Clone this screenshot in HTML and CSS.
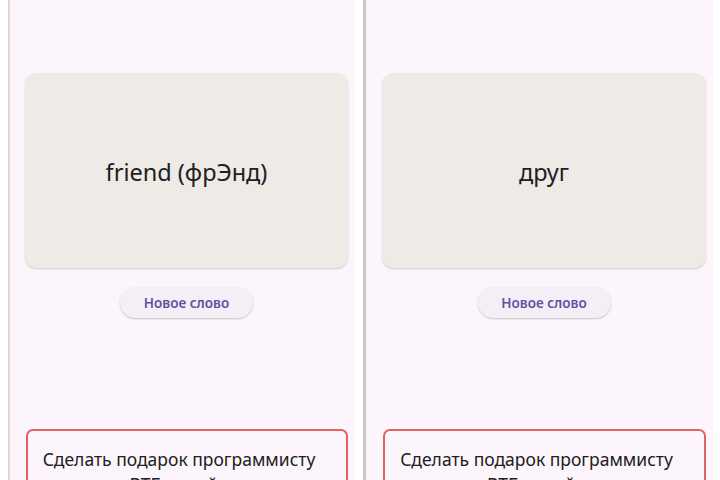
FILE: index.html
```html
<!DOCTYPE html>
<html lang="ru">
<head>
<meta charset="utf-8">
<link rel="stylesheet" href="styles.css">
</head>
<body>
<div class="screens">
  <section class="phone phone-left">
    <div class="card"><span class="word">friend (фрЭнд)</span></div>
    <div class="btn-row"><button class="btn">Новое слово</button></div>
    <div class="gift">Сделать подарок программисту ВТБ онлайн</div>
  </section>
  <section class="phone phone-right">
    <div class="card"><span class="word">друг</span></div>
    <div class="btn-row"><button class="btn">Новое слово</button></div>
    <div class="gift">Сделать подарок программисту ВТБ онлайн</div>
  </section>
</div>
</body>
</html>
```
FILE: styles.css
```css
html, body {
  margin: 0;
  padding: 0;
  background: #ffffff;
  height: 480px;
  overflow: hidden;
}
body {
  font-family: "Noto Sans", "Open Sans", sans-serif;
}
.screens {
  display: flex;
  height: 480px;
  padding-left: 8px;
  gap: 8px;
}
.phone {
  background: #fcf5fc;
  border-left: 2px solid #dcd8de;
  padding: 73px 7px 0 15px;
  display: flex;
  flex-direction: column;
  overflow: hidden;
}
.phone > * { flex-shrink: 0; }
.phone-left { width: 323px; }
.phone-right { width: 324px; border-left: 3px solid #c9c5cb; padding-left: 16px; }
.card {
  height: 195px;
  background: #eeeae6;
  border-radius: 12px;
  box-shadow: 0 1px 2px rgba(0,0,0,0.18);
  display: flex;
  align-items: center;
  justify-content: center;
}
.word {
  font-size: 23.5px;
  color: #202020;
  margin-top: 2px;
}
.btn-row {
  display: flex;
  justify-content: center;
  margin-top: 19px;
}
.btn {
  width: 133px;
  height: 31px;
  border: none;
  border-radius: 16px;
  background: #f4eef6;
  box-shadow: 0 1px 2px rgba(0,0,0,0.2);
  font-family: "Noto Sans", "Open Sans", sans-serif;
  font-size: 13.5px;
  font-weight: 600;
  color: #6650a0;
  padding: 0;
}
.gift {
  margin-top: 111px;
  margin-left: 1px;
  border: 2px solid #e06262;
  border-radius: 7px;
  padding: 16px 26px 10px 10px;
  font-size: 17.5px;
  line-height: 25px;
  color: #202020;
  text-align: center;
  height: 80px;
}
```
